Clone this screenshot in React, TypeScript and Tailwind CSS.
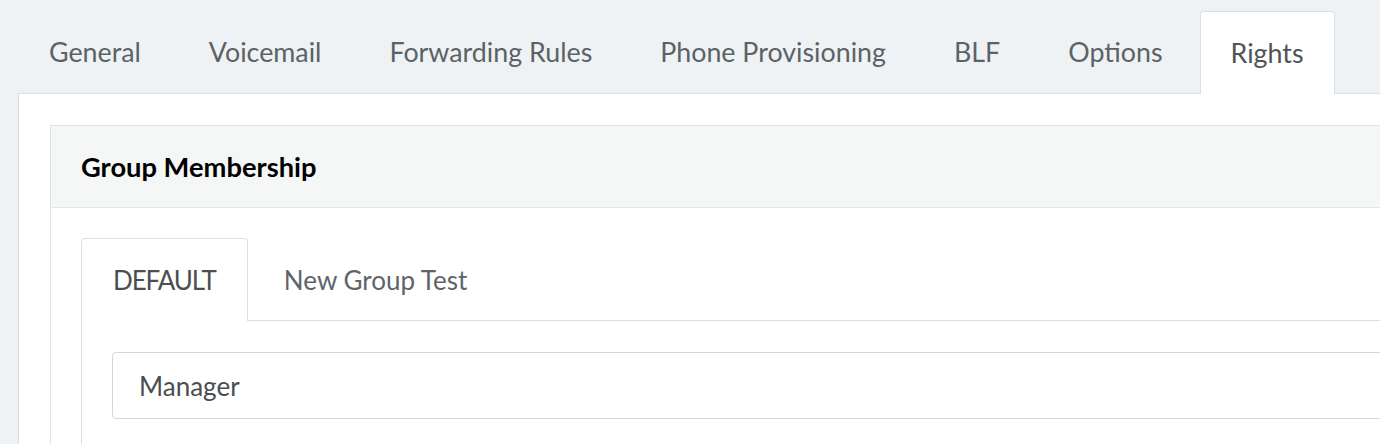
import React from "react";

const topTabs = ["General", "Voicemail", "Forwarding Rules", "Phone Provisioning", "BLF", "Options", "Rights"];

export default function App() {
  const active = "Rights";
  return (
    <div className="min-h-screen w-full overflow-hidden bg-[#eff2f4] font-['Lato',sans-serif] leading-none">
      <div className="w-[1500px] pt-[11px] text-[26.8px]">
        <ul className="relative z-10 -mb-px flex gap-[6px] pl-[18px]">
          {topTabs.map((t) => (
            <li
              key={t}
              className={
                t === active
                  ? "flex h-[83px] items-center rounded-t-[4px] border border-b-0 border-[#dcdfe1] bg-white px-[30px] text-[#4f5457]"
                  : "flex h-[83px] items-center border border-transparent px-[30px] text-[#5b6266]"
              }
            >
              {t}
            </li>
          ))}
        </ul>

        <div className="ml-[18px] border-l border-t border-[#dcdfe1] bg-white pl-[31px] pt-[31px]">
          <div className="border-l border-t border-[#dfe3e5]">
            <div className="flex h-[82px] items-center border-b border-[#e3e6e8] bg-[#f5f7f7] px-[30px] text-[27.3px] font-bold text-black">
              Group Membership
            </div>
            <div className="pl-[30px] pt-[30px] text-[26px]">
              <ul className="relative z-10 -mb-px flex gap-[4px]">
                <li className="flex h-[83px] items-center rounded-t-[4px] border border-b-0 border-[#dcdfe1] bg-white px-[31px] tracking-[-1.1px] text-[#4b4f52]">
                  DEFAULT
                </li>
                <li className="flex h-[83px] items-center border border-transparent px-[31px] text-[#5e6569]">
                  New Group Test
                </li>
              </ul>
              <div className="border-l border-t border-[#dcdfe1] pl-[30px] pt-[31px] pb-[40px]">
                <div className="flex h-[67px] items-center rounded-[4px] border border-[#d3d9db] px-[26px] text-[#4a4e51]">
                  Manager
                </div>
              </div>
            </div>
          </div>
        </div>
      </div>
    </div>
  );
}
